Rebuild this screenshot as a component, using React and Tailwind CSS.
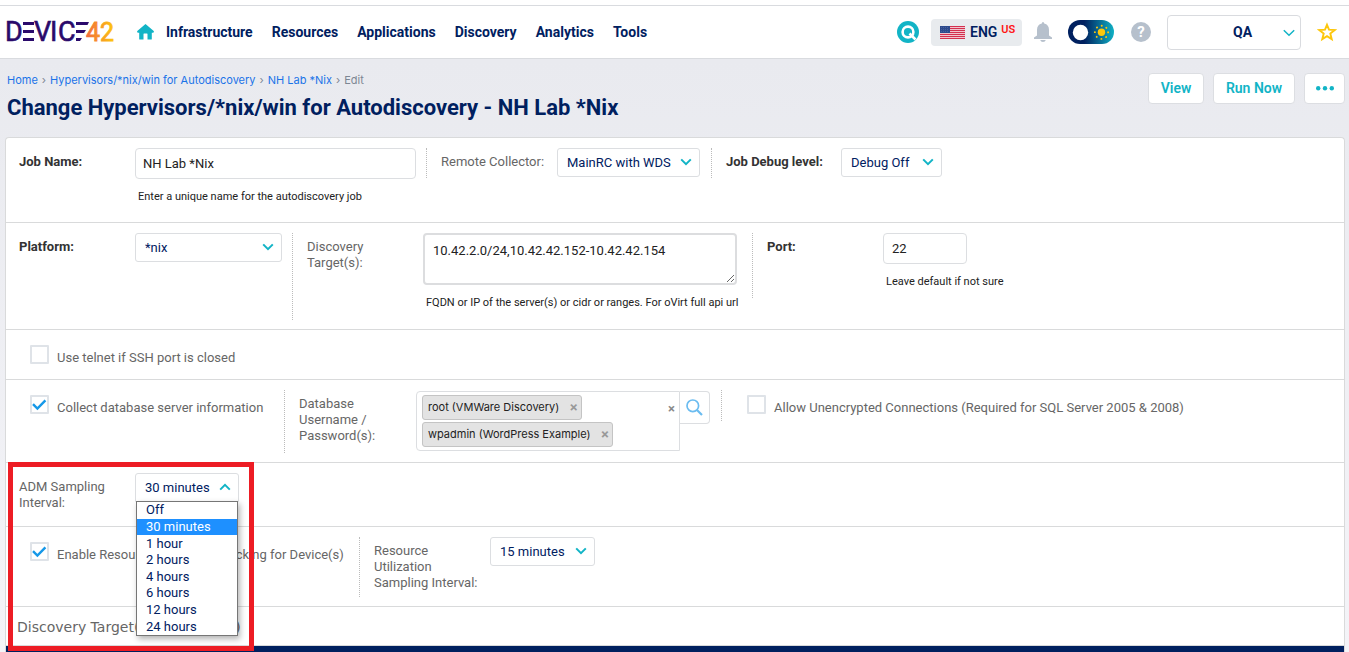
import React from "react";

const heading = "font-['Roboto',sans-serif]";
const body = "font-['Roboto',sans-serif]";

function Chevron({ up = false, className = "" }) {
  return (
    <svg viewBox="0 0 12 8" className={`pointer-events-none h-2 w-3 ${className}`} fill="none" stroke="#12b4c6" strokeWidth="2" aria-hidden="true">
      <path d={up ? "M1.2 6.6 6 1.8l4.8 4.8" : "M1.2 1.4 6 6.2l4.8-4.8"} />
    </svg>
  );
}

function Select({ id, options, width, open = false, value, label }) {
  return (
    <div className={`relative shrink-0 ${width}`}>
      <select
        id={id}
        aria-label={label}
        defaultValue={value}
        className={`h-[29px] w-full appearance-none border border-[#dcdee1] bg-white pr-7 pl-[9px] text-[13px] text-[#00205f] ${open ? "rounded-t-[3px]" : "rounded-[3px]"}`}
      >
        {options.map((o) => (
          <option key={o}>{o}</option>
        ))}
      </select>
      <Chevron up={open} className="absolute top-[10px] right-2" />
      {open && (
        <ul
          role="listbox"
          aria-label="Sampling interval options"
          className="absolute top-7 right-px left-px z-10 flex h-[135px] flex-col border border-[#767676] bg-white text-[13px] leading-4 text-[#00205f] shadow-[2px_3px_6px_rgba(0,0,0,0.3)]"
        >
          {options.map((o) => (
            <li
              key={o}
              role="option"
              aria-selected={o === value}
              className={`flex flex-1 items-center pl-[9px] ${o === value ? "bg-[#1e90ff] text-white" : ""}`}
            >
              {o}
            </li>
          ))}
        </ul>
      )}
    </div>
  );
}

function Label({ htmlFor, bold = false, children, width = "w-[116px]" }) {
  return (
    <label
      htmlFor={htmlFor}
      className={`block shrink-0 pt-1.5 pr-2 text-[13px] leading-4 ${width} ${bold ? "font-bold text-[#333]" : "text-[#666]"}`}
    >
      {children}
    </label>
  );
}

function Check({ id, checked = false, children }) {
  return (
    <div className="flex items-start pt-[5px]">
      <span className="relative block size-[19px] shrink-0">
        <input id={id} type="checkbox" defaultChecked={checked} className="peer block size-[19px] appearance-none rounded-[1px] border-2 border-[#dfe3e8] bg-white" />
        <svg viewBox="0 0 19 19" className="pointer-events-none absolute inset-0 hidden peer-checked:block" fill="none" stroke="#1598e8" strokeWidth="2.4" aria-hidden="true">
          <path d="m3 9.200 4.400 4.400L15.400 5.400" />
        </svg>
      </span>
      <label htmlFor={id} className="pt-[5px] pl-2 text-[13px] leading-4 whitespace-nowrap text-[#666]">
        {children}
      </label>
    </div>
  );
}

function Hint({ children }) {
  return <p className="pt-2.5 pl-[3px] text-[11px] leading-4 whitespace-nowrap text-[#222]">{children}</p>;
}

function Row({ height, children }) {
  return <div className={`flex items-start border-b border-[#d9dadb] px-[13px] pt-2.5 ${height}`}>{children}</div>;
}

function Divided({ height, width = "", children }) {
  return <div className={`flex shrink-0 items-start border-l border-dotted border-[#bbb] pl-[14px] ${height} ${width}`}>{children}</div>;
}

function Logo() {
  return (
    <a href="#home" aria-label="Device42" className="block">
      <svg width="108" height="36" viewBox="-1 -7 108 36" className="overflow-visible font-['Liberation_Sans_Narrow','Roboto',sans-serif]" fontSize="27">
        <defs>
          <linearGradient id="logo42" x1="0" x2="1">
            <stop offset="0" stopColor="#f26a3d" />
            <stop offset="1" stopColor="#fdc70c" />
          </linearGradient>
        </defs>
        <g fill="#2a0a6b" stroke="#2a0a6b" strokeWidth="0.6">
          <text x="-2" y="20">D</text>
          <text x="27" y="20">V</text>
          <text x="43" y="20">I</text>
          <text x="51" y="20">C</text>
        </g>
        <path fill="#2a0a6b" d="M16 1h11v3H16zM16 9h11v3H16zM16 17h11v3H16zM69 1h13l-1.500 3H69zM69 9h10l-2 3h-8zM69 17h6l-2 3h-4z" />
        <text x="79" y="20" fontSize="25" fill="url(#logo42)" stroke="url(#logo42)" strokeWidth="0.8">42</text>
      </svg>
    </a>
  );
}

function Flag() {
  return (
    <svg viewBox="0 0 25 13" className="h-[13px] w-[25px]" aria-hidden="true">
      <rect width="25" height="13" fill="#f0c4cd" />
      {[0, 2, 4, 6, 8, 10, 12].map((y) => (
        <rect key={y} y={y} width="25" height="1" fill="#d3304f" />
      ))}
      <rect width="10" height="7" fill="#2d4a8c" />
      {[1, 3, 5].map((y) => (
        <path key={y} d={`M1 ${y + 0.5}h8`} stroke="#5b71a8" strokeWidth="0.6" strokeDasharray="1 1" />
      ))}
    </svg>
  );
}

function Toggle() {
  return (
    <button type="button" role="switch" aria-checked="true" aria-label="Light theme" className="block">
      <svg width="46" height="24" viewBox="0 0 46 24">
        <defs>
          <linearGradient id="toggle" x1="0" x2="1">
            <stop offset="0.35" stopColor="#00205f" />
            <stop offset="1" stopColor="#10b0c4" />
          </linearGradient>
        </defs>
        <rect width="46" height="24" rx="12" fill="url(#toggle)" />
        <circle cx="12.500" cy="12.500" r="7.700" fill="#fff" />
        <circle cx="33.500" cy="12.300" r="3.700" fill="#fdc70c" />
        <circle cx="33.500" cy="12.300" r="6.600" fill="none" stroke="#fdc70c" strokeWidth="1.900" strokeLinecap="round" strokeDasharray="0.1 5.084" />
      </svg>
    </button>
  );
}

const navItems = ["Infrastructure", "Resources", "Applications", "Discovery", "Analytics", "Tools"];

function Header() {
  return (
    <header className="mt-[5px] flex h-[54px] items-center justify-between border-y border-[#d9dbdf] bg-white pr-3 pl-[6px]">
      <div className="flex items-center">
        <Logo />
        <a href="#home" aria-label="Home" className="ml-[23px] block">
          <svg width="17" height="16" viewBox="0 0 17 16" fill="#12b4c6">
            <path d="M8.500 0 17 7.300l-.6 1.400h-1.600V15q0 .6-.6.6H10.500V10q0-.5-.5-.5H7q-.5 0-.5.5v5.600H2.800q-.6 0-.6-.6V8.700H.6L0 7.300z" />
          </svg>
        </a>
        <nav className={`ml-3 flex gap-[19px] text-[14px] font-bold text-[#00205f] ${heading}`}>
          {navItems.map((n) => (
            <a key={n} href={`#${n}`}>{n}</a>
          ))}
        </nav>
      </div>
      <div className="flex items-center">
        <button type="button" aria-label="Search" className="block">
          <svg width="22" height="22" viewBox="0 0 22 22" fill="none">
            <circle cx="11" cy="11" r="11" fill="#12b4c6" />
            <circle cx="11" cy="11" r="5.400" stroke="#fff" strokeWidth="2.600" />
            <path d="m12.500 12.500 6 6" stroke="#fff" strokeWidth="2.600" />
          </svg>
        </button>
        <button type="button" className={`ml-3 flex h-[27px] w-[91px] items-center rounded-sm bg-[#e8ebee] pl-[9px] text-[14px] font-semibold text-[#00205f] ${heading}`}>
          <Flag />
          <span className="ml-[5px]">ENG</span>
          <span className="mb-1 ml-1 text-[11px] text-[#ff1414]">US</span>
        </button>
        <button type="button" aria-label="Notifications" className="ml-3 block">
          <svg width="18" height="20" viewBox="0 0 18 20" fill="#b6c0cc">
            <path d="M9 0q1.200 0 1.200 1.500Q15 2.600 15 8v5.500l3 2V17H0v-1.500l3-2V8q0-5.400 4.800-6.500Q7.800 0 9 0zM6.200 18h5.600q-.6 2-2.800 2t-2.800-2z" />
          </svg>
        </button>
        <div className="ml-4"><Toggle /></div>
        <button type="button" aria-label="Help" className="ml-[17px] flex size-5 items-center justify-center rounded-full bg-[#b6c0cc] font-['Roboto',sans-serif] text-[15px] font-bold text-white">?</button>
        <div className="relative ml-4">
          <select aria-label="Environment" className={`h-[35px] w-[134px] appearance-none rounded border border-[#d9dbdf] bg-white pl-[65px] text-[14px] font-bold text-[#00205f] ${heading}`}>
            <option>QA</option>
          </select>
          <svg viewBox="0 0 12 8" className="pointer-events-none absolute top-[14px] right-[6px] h-2 w-3" fill="none" stroke="#12b4c6" strokeWidth="1.500" aria-hidden="true">
            <path d="M.8 1.200 6 6.200l5.200-5" />
          </svg>
        </div>
        <button type="button" aria-label="Favorite" className="ml-4 block">
          <svg width="20" height="20" viewBox="0 0 20 20" fill="none" stroke="#fdc70c" strokeWidth="1.900">
            <path d="m10 2.800 2 4.900 5.700.4-4.400 3.500 1.400 5.500-4.700-3-4.700 3 1.400-5.500L2.300 8.100 8 7.700z" />
          </svg>
        </button>
      </div>
    </header>
  );
}

const actionButton = "flex h-[31px] items-center justify-center rounded-sm border border-[#dcdee2] bg-white text-[14px] font-semibold text-[#12b4c6]";

function Tag({ children }) {
  return (
    <span className="flex h-[25px] items-center gap-[10px] rounded-[3px] border border-[#c4c4c4] bg-[#e3e3e3] pr-[3px] pl-[5px] font-['Inter',sans-serif] text-[11px] text-[#222]">
      {children}
      <button type="button" aria-label={`Remove ${children}`} className="text-[13px] font-bold text-[#999]">×</button>
    </span>
  );
}

const intervals = ["Off", "30 minutes", "1 hour", "2 hours", "4 hours", "6 hours", "12 hours", "24 hours"];

export default function App() {
  return (
    <div className={`relative min-h-screen overflow-hidden bg-white ${body}`}>
      <Header />
      <main className="bg-linear-to-b from-[#e9eaef] to-[#f4f4f8] pr-1 pl-[5px]">
        <div className="flex h-[78px] justify-between">
          <div className="pt-[13px] pl-[2px]">
            <nav aria-label="Breadcrumb" className="flex gap-1 font-['Inter',sans-serif] text-[11px] leading-4 text-[#7d8793]">
              <a href="#home" className="text-[#1a73e8]">Home</a>
              <span>›</span>
              <a href="#jobs" className="text-[#1a73e8]">Hypervisors/*nix/win for Autodiscovery</a>
              <span>›</span>
              <a href="#job" className="text-[#1a73e8]">NH Lab *Nix</a>
              <span>›</span>
              <span>Edit</span>
            </nav>
            <h1 className={`pt-1.5 text-[22px] leading-7 font-bold text-[#00205f] ${heading}`}>
              Change Hypervisors/*nix/win for Autodiscovery - NH Lab *Nix
            </h1>
          </div>
          <div className={`flex gap-[9px] pt-[14px] ${heading}`}>
            <button type="button" className={`w-[56px] ${actionButton}`}>View</button>
            <button type="button" className={`w-[82px] ${actionButton}`}>Run Now</button>
            <button type="button" aria-label="More" className={`w-[41px] ${actionButton}`}>
              <svg width="18" height="6" viewBox="0 0 18 6" fill="#12b4c6">
                <circle cx="2.200" cy="2.200" r="2.200" />
                <circle cx="9" cy="2.200" r="2.200" />
                <circle cx="15.800" cy="2.200" r="2.200" />
              </svg>
            </button>
          </div>
        </div>

        <form className="rounded-t-sm border border-b-0 border-[#d9dadb] bg-white">
          <Row height="min-h-[85px]">
            <Label htmlFor="job" bold>Job Name:</Label>
            <div className="w-[291px] shrink-0">
              <input id="job" defaultValue="NH Lab *Nix" className="h-[31px] w-[281px] rounded border border-[#dcdee1] px-[7px] text-[13px] text-[#222]" />
              <Hint>Enter a unique name for the autodiscovery job</Hint>
            </div>
            <Divided height="h-[30px]" width="w-[285px]">
              <Label htmlFor="collector">Remote Collector:</Label>
              <Select id="collector" options={["MainRC with WDS"]} width="w-[143px]" />
            </Divided>
            <Divided height="h-[30px]">
              <Label htmlFor="debug" bold width="w-[115px]">Job Debug level:</Label>
              <Select id="debug" options={["Debug Off"]} width="w-[101px]" />
            </Divided>
          </Row>

          <Row height="min-h-[107px]">
            <Label htmlFor="platform" bold>Platform:</Label>
            <div className="w-[157px] shrink-0">
              <Select id="platform" options={["*nix"]} width="w-[147px]" />
            </div>
            <Divided height="h-[87px]" width="w-[460px]">
              <Label htmlFor="targets">Discovery Target(s):</Label>
              <div className="w-[314px]">
                <textarea id="targets" defaultValue="10.42.2.0/24,10.42.42.152-10.42.42.154" className="block h-[52px] w-full rounded border-2 border-[#dcdddf] px-2 py-1.5 text-[13px] leading-5 text-[#222]" />
                <Hint>FQDN or IP of the server(s) or cidr or ranges. For oVirt full api url</Hint>
              </div>
            </Divided>
            <Divided height="h-[65px]">
              <Label htmlFor="port" bold>Port:</Label>
              <div>
                <input id="port" defaultValue="22" className="h-[31px] w-[84px] rounded border border-[#dcdee1] px-2 text-[13px] text-[#222]" />
                <Hint>Leave default if not sure</Hint>
              </div>
            </Divided>
          </Row>

          <Row height="min-h-[50px]">
            <div className="pl-[11px]">
              <Check id="telnet">Use telnet if SSH port is closed</Check>
            </div>
          </Row>

          <Row height="min-h-[83px]">
            <div className="w-[265px] shrink-0 pl-[11px]">
              <Check id="collect" checked>Collect database server information</Check>
            </div>
            <Divided height="h-[63px]" width="w-[437px]">
              <Label htmlFor="creds" width="w-[117px]">Database Username / Password(s):</Label>
              <div className="flex items-start pt-px">
                <div className="flex h-[60px] w-[264px] items-start justify-between rounded-l-sm border border-[#dcdee1] p-[3px] pl-[5px]">
                  <div id="creds" className="flex flex-col items-start gap-[2px]">
                    <Tag>root (VMWare Discovery)</Tag>
                    <Tag>wpadmin (WordPress Example)</Tag>
                  </div>
                  <button type="button" aria-label="Clear all" className="pt-1.5 pr-px text-[13px] leading-4 font-bold text-[#888]">×</button>
                </div>
                <button type="button" aria-label="Look up credentials" className="flex h-[33px] w-[30px] items-center justify-center rounded-r-sm border border-l-0 border-[#dcdee1]">
                  <svg width="17" height="17" viewBox="0 0 17 17" fill="none" stroke="#6bbcf0">
                    <circle cx="6.800" cy="6.800" r="5.800" strokeWidth="1.700" />
                    <path d="m11 11 5 5" strokeWidth="2.200" />
                  </svg>
                </button>
              </div>
            </Divided>
            <Divided height="h-[31px]">
              <div className="pl-[11px]">
                <Check id="unencrypted">Allow Unencrypted Connections (Required for SQL Server 2005 &amp; 2008)</Check>
              </div>
            </Divided>
          </Row>

          <Row height="min-h-[64px]">
            <Label htmlFor="adm">ADM Sampling Interval:</Label>
            <Select id="adm" options={intervals} value="30 minutes" width="w-[104px]" open />
          </Row>

          <Row height="min-h-[80px]">
            <div className="w-[340px] shrink-0 pl-[11px]">
              <Check id="resource" checked>Enable Resource Utilization Tracking for Device(s)</Check>
            </div>
            <Divided height="h-[60px]">
              <Label htmlFor="util" width="w-[116px]">Resource Utilization Sampling Interval:</Label>
              <Select id="util" options={["15 minutes"]} width="w-[105px]" />
            </Divided>
          </Row>

          <h2 className="h-[39px] border-b border-[#d9dadb] pt-3 pl-[11px] font-['DejaVu_Sans',sans-serif] text-[14px] leading-4 text-[#666]">
            Discovery Target(s) (Exclusions)
          </h2>
          <div className="h-[7px] bg-[#00205f]" />
        </form>
      </main>
      <div className="pointer-events-none absolute top-[462px] left-[8px] z-20 h-[189px] w-[246px] border-[5px] border-[#ed1c24]" aria-hidden="true" />
    </div>
  );
}
